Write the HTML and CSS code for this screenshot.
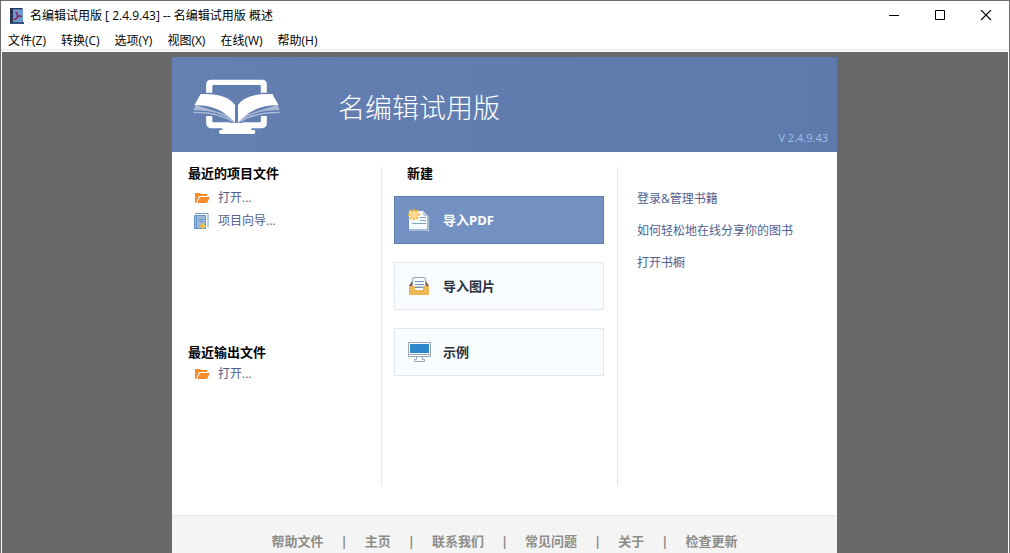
FILE: index.html
```html
<!DOCTYPE html>
<html lang="zh-CN">
<head>
<meta charset="utf-8">
<title>名编辑试用版</title>
<link rel="stylesheet" href="styles.css">
</head>
<body>
<div class="window">
  <header class="titlebar">
    <svg class="app-icon" width="14" height="16" viewBox="0 0 14 16" aria-hidden="true">
      <path d="M1 1h12v14H1z" fill="#5b83bd"/>
      <path d="M0 0h12l1 1H3v14H0z" fill="#27334d"/>
      <path d="M3 2h10v12H3z" fill="#6e97cf"/>
      <path d="M3 14h11v2H0v-1z" fill="#35507f"/>
      <path d="M5.500 4.500q2 0 2 4 2-1 4.500 0M7.500 8.500q-1 3-3.500 3" fill="none" stroke="#8c1a3c" stroke-width="1.300"/>
    </svg>
    <h1 class="window-title">名编辑试用版 [ 2.4.9.43] -- 名编辑试用版 概述</h1>
    <div class="window-controls">
      <button class="win-btn" type="button" aria-label="最小化"><svg width="12" height="12" viewBox="0 0 12 12"><path d="M1 5.500h10" stroke="#000"/></svg></button>
      <button class="win-btn" type="button" aria-label="最大化"><svg width="12" height="12" viewBox="0 0 12 12"><path d="M1.500 .500h9v9h-9z" fill="none" stroke="#000"/></svg></button>
      <button class="win-btn" type="button" aria-label="关闭"><svg width="12" height="12" viewBox="0 0 12 12"><path d="M1 0l10 10M11 0L1 10" stroke="#000" stroke-width="1.100"/></svg></button>
    </div>
  </header>
  <nav class="menubar">
    <button class="menu" type="button">文件(Z)</button>
    <button class="menu" type="button">转换(C)</button>
    <button class="menu" type="button">选项(Y)</button>
    <button class="menu" type="button">视图(X)</button>
    <button class="menu" type="button">在线(W)</button>
    <button class="menu" type="button">帮助(H)</button>
  </nav>
  <main class="workspace">
    <div class="panel">
      <div class="banner">
        <svg class="logo" width="87" height="56" viewBox="69 87 261 168" aria-hidden="true">
          <path d="M118 128v-24q0-5 5-5h153q5 0 5 5v24M118 198v22q0 5 5 5h153q5 0 5-5v-22" fill="none" stroke="#fff" stroke-width="19"/>
          <path d="M128 105h144v23H128zM128 198h144v19H128z" fill="#617eb0"/>
          <path d="M157 230h87v10h7q5 0 5 6t-5 6h-99q-5 0-5-6t5-6h5z" fill="#fff"/>
          <path d="M71 181q70-3 123 36l11 0q53-39 124-36v15q-72-4-114 23h-32q-42-27-114-23z" fill="#617eb0"/>
          <path d="M77 165l-7 16q75-2 117 32-40-29-117-28v5q70-2 120 28l5-1v-15z" fill="#a9b9d6"/>
          <path d="M322 165l7 16q-75-2-117 32 40-29 117-28v5q-70-2-120 28l-5-1v-15z" fill="#a9b9d6"/>
          <path d="M92 132q78-3 103 33v52q-50-55-122-51z" fill="#fff"/>
          <path d="M307 132q-78-3-103 33v52q50-55 122-51z" fill="#fff"/>
        </svg>
        <h2 class="product">名编辑试用版</h2>
        <span class="version">V 2.4.9.43</span>
      </div>
      <div class="columns">
        <div class="column files">
          <section class="recent">
            <h3 class="heading">最近的项目文件</h3>
            <a class="file-link" href="#">
              <svg width="16" height="16" viewBox="0 0 16 16" aria-hidden="true"><path d="M1 13V3h5l1 1h6v2H5L2 13z" fill="#fb8a2a"/><path d="M6 7h10l-3 6H3z" fill="#fb8a2a"/></svg>
              打开...
            </a>
            <a class="file-link" href="#">
              <svg width="16" height="16" viewBox="0 0 16 16" aria-hidden="true"><path d="M1 .5h13v14" fill="none" stroke="#6f9fc8"/><path d="M.5 2.500h11v13H.5z" fill="#9dbbdc" stroke="#6493c1"/><path d="M2.500 2v13M5 6.500h5M5 8.500h4" stroke="#6493c1"/><path d="M9 10v6M6 13h6" stroke="#ffc21a" stroke-width="1.500"/></svg>
              项目向导...
            </a>
          </section>
          <section class="recent">
            <h3 class="heading">最近输出文件</h3>
            <a class="file-link" href="#">
              <svg width="16" height="16" viewBox="0 0 16 16" aria-hidden="true"><path d="M1 13V3h5l1 1h6v2H5L2 13z" fill="#fb8a2a"/><path d="M6 7h10l-3 6H3z" fill="#fb8a2a"/></svg>
              打开...
            </a>
          </section>
        </div>
        <section class="column create">
          <h3 class="heading create-heading">新建</h3>
          <div class="actions">
            <button class="action primary" type="button">
              <svg width="24" height="24" viewBox="0 0 24 24" aria-hidden="true"><path d="M2 3h15l5 5v15H2z" fill="#f5faff"/><path d="M17 3l4 4v15H2" fill="none" stroke="#5879a8"/><path d="M17 3v4h4M5 15.500h14M13 9.500h6M13 12.500h6" fill="none" stroke="#7da0bd"/><path d="M7 1v11M1 6.500h12M3 2l8 9M11 2l-8 9" stroke="#ffb52b" stroke-width="2"/><circle cx="7" cy="6.500" r="3.500" fill="#ffdc91"/></svg>
              导入PDF
            </button>
            <button class="action" type="button">
              <svg width="24" height="24" viewBox="0 0 24 24" aria-hidden="true"><path d="M2 12l3-5h14l3 5z" fill="#875b3d"/><path d="M5.500 13V5q0-1.500 1.500-1.500h10q1.500 0 1.500 1.500v8z" fill="#f8fbfe" stroke="#8ea5bd"/><path d="M8 7.500h9M8 10.500h9M8 13.500h9" stroke="#6f94b4"/><path d="M2 12h6v4h8v-4h6v9H2z" fill="#edb758"/></svg>
              导入图片
            </button>
            <button class="action" type="button">
              <svg width="24" height="24" viewBox="0 0 24 24" aria-hidden="true"><path d="M1.500 2.500h22v14h-22zM1.500 14.500h22" fill="#fbfdff" stroke="#97a8bd"/><path d="M3 4h19v9H3z" fill="#2d87ca"/><path d="M9.500 17v2.500h-2v2h10v-2h-2V17" fill="none" stroke="#97a8bd"/></svg>
              示例
            </button>
          </div>
        </section>
        <nav class="column online">
          <a class="online-link" href="#">登录&amp;管理书籍</a>
          <a class="online-link" href="#">如何轻松地在线分享你的图书</a>
          <a class="online-link" href="#">打开书橱</a>
        </nav>
      </div>
      <footer class="footer">
        <a class="footer-link" href="#">帮助文件</a><span class="sep">|</span>
        <a class="footer-link" href="#">主页</a><span class="sep">|</span>
        <a class="footer-link" href="#">联系我们</a><span class="sep">|</span>
        <a class="footer-link" href="#">常见问题</a><span class="sep">|</span>
        <a class="footer-link" href="#">关于</a><span class="sep">|</span>
        <a class="footer-link" href="#">检查更新</a>
      </footer>
    </div>
  </main>
</div>
</body>
</html>
```
FILE: styles.css
```css
* { box-sizing: border-box; }

body {
  margin: 0;
  font: 12px/16px "Open Sans", "Noto Sans CJK SC", sans-serif;
  color: #000;
}

h1, h2, h3 { margin: 0; font-weight: normal; }
button { font: inherit; color: inherit; }
a { text-decoration: none; }
svg { display: block; flex: none; }

.window {
  display: flex;
  flex-direction: column;
  min-height: 100vh;
  border: 1px solid #6d6d6d;
  border-bottom: 0;
  background: #fff;
}

.titlebar {
  display: flex;
  align-items: center;
  gap: 6px;
  height: 29px;
  padding-left: 9px;
}

.window-title { flex: 1; font-size: 12px; line-height: 16px; }
.window-controls { display: flex; }

.win-btn {
  display: grid;
  place-items: center;
  width: 46px;
  height: 29px;
  padding: 0;
  border: 0;
  background: none;
}

.menubar {
  display: flex;
  gap: 15px;
  padding: 3px 7px 0;
  border-bottom: 2px solid #f0f0f0;
}

.menu { padding: 0; border: 0; background: none; line-height: 16px; }

.workspace {
  display: flex;
  flex: 1;
  justify-content: center;
  margin: 1px 1px 0;
  padding: 5px 1px 0 0;
  background: #696969;
}

.panel {
  display: flex;
  flex-direction: column;
  flex: 0 1 665px;
  background: #fff;
}

.banner {
  display: flex;
  align-items: center;
  height: 95px;
  padding: 0 9px 0 21px;
  background: linear-gradient(90deg, #6480b1, #5e7aad);
}

.logo { margin-top: 5px; }

.product {
  flex: 1;
  padding: 5px 0 0 58px;
  color: #fff;
  font: 300 27px/36px "Noto Sans CJK SC", sans-serif;
}

.version {
  align-self: flex-end;
  padding-bottom: 6px;
  color: #9cc0e6;
  font-size: 11px;
}

.columns {
  display: grid;
  grid-template-columns: 210fr 236fr 219fr;
  padding: 15px 0 29px;
}

.column { min-height: 319px; }
.files, .create { border-right: 1px solid #e6e7ea; }

.files { display: grid; grid-template-rows: 179px auto; padding-left: 16px; }

.heading { font-size: 13px; line-height: 13px; font-weight: bold; }

.file-link {
  display: flex;
  align-items: center;
  gap: 8px;
  padding: 7px 0 0 6px;
  color: #50608f;
}

.recent:first-child .heading { padding-bottom: 3px; }

.create { padding: 0 13px 0 12px; }
.create-heading { padding-left: 13px; }
.actions { display: grid; gap: 18px; padding-top: 16px; }

.action {
  display: flex;
  align-items: center;
  gap: 12px;
  height: 48px;
  padding: 0 12px;
  border: 1px solid #e3e8f0;
  background: #f9fcff;
  color: #29323f;
  font-size: 13px;
  font-weight: bold;
}

.action.primary {
  border-color: #5b7ba9;
  background: #7491c3;
  color: #fff;
}

.online {
  display: flex;
  flex-direction: column;
  align-items: flex-start;
  gap: 16px;
  padding: 24px 0 0 19px;
}

.online-link { color: #50608f; }

.footer {
  display: flex;
  flex: 1;
  justify-content: center;
  gap: 17px;
  padding: 17px 0 4px;
  border-top: 1px solid #e6e7e8;
  background: #f4f4f4;
  color: #8e8d88;
  font-size: 13px;
  font-weight: bold;
}

.footer-link { color: #8e8d88; }
```
